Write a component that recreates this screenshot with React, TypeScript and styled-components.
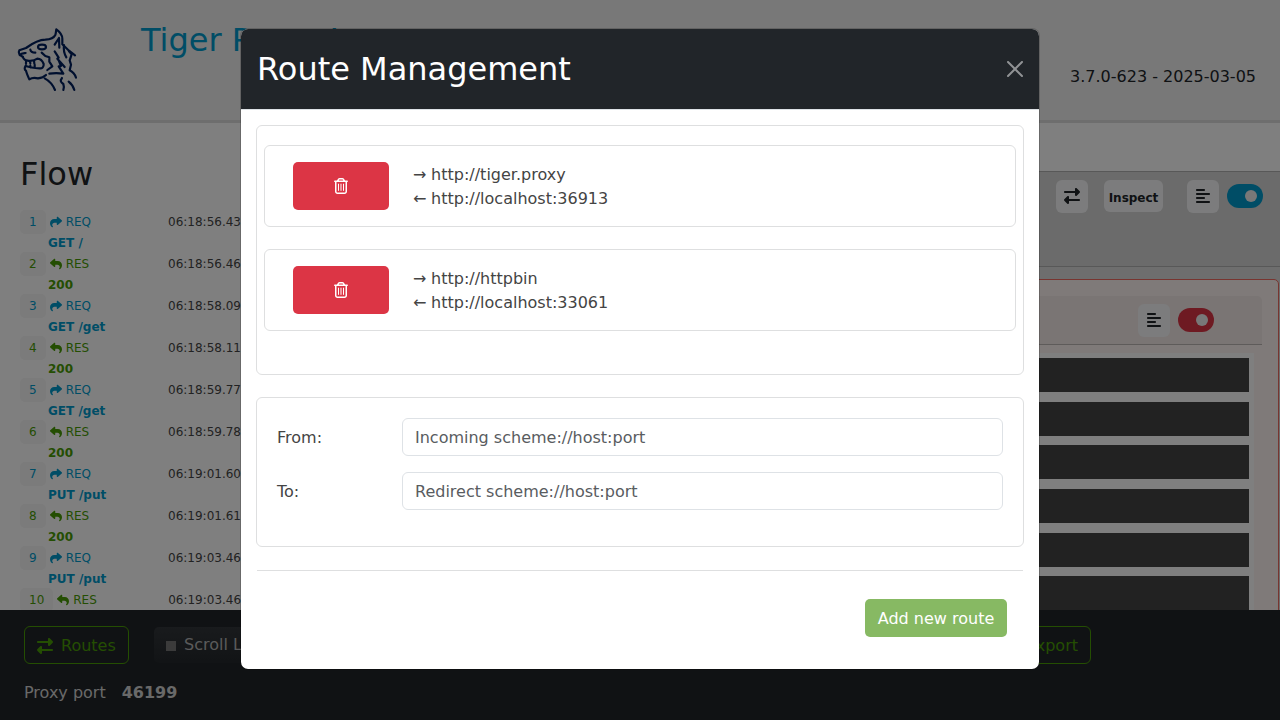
import React from "react";
import styled, { createGlobalStyle } from "styled-components";
import { FaAlignLeft, FaRegTrashCan, FaReply, FaRightLeft, FaShare } from "react-icons/fa6";

const GlobalStyle = createGlobalStyle`
  *, *::before, *::after { box-sizing: border-box; }
  body {
    margin: 0;
    overflow: hidden;
    background: #fff;
    color: #212529;
    font: 16px/24px "DejaVu Sans", sans-serif;
  }
  button, input { font: inherit; }
`;

const BLUE = "#009bcd";
const GREEN = "#499c04";

const Page = styled.div`
  display: flex;
  flex-direction: column;
  height: 720px;
  overflow: hidden;
`;

const Header = styled.header`
  display: flex;
  align-items: flex-start;
  height: 123px;
  flex: none;
  padding: 20px 24px 0 10px;
  background: #f0f0f0;
  border-bottom: 3px solid #dcdcdc;
`;

const Logo = styled.svg`
  width: 80px;
  height: 80px;
  flex: none;
`;

const AppTitle = styled.h1`
  margin: 1px 0 0 51px;
  font-size: 32px;
  line-height: 38px;
  font-weight: 400;
  color: ${BLUE};
`;

const Version = styled.span`
  margin: 45px 0 0 auto;
`;

const Main = styled.main`
  display: flex;
  flex: 1;
  min-height: 0;
  overflow: hidden;
`;

const Sidebar = styled.aside`
  width: 320px;
  flex: none;
  padding: 32px 0 0 20px;
`;

const FlowTitle = styled.h2`
  margin: 0 0 17px;
  font-size: 32px;
  line-height: 39px;
  font-weight: 400;
`;

const FlowItem = styled.div<{ $color: string }>`
  height: 42px;
  font-size: 12px;
  line-height: 21px;
  color: ${(p) => p.$color};
`;

const FlowLine = styled.div`
  display: flex;
  align-items: center;
  height: 22px;
`;

const Badge = styled.span`
  height: 24px;
  flex: none;
  padding: 1px 9px 0;
  border-radius: 5px;
  background: #f6f6f6;
  line-height: 22px;
`;

const FlowKind = styled.span<{ $wide: boolean }>`
  display: flex;
  align-items: center;
  gap: 4px;
  width: ${(p) => (p.$wide ? 115 : 122)}px;
  padding-left: 4px;
`;

const FlowTime = styled.span`
  margin-left: auto;
  width: 152px;
  color: #444;
`;

const FlowDetail = styled.div`
  padding-left: 28px;
  font-weight: 700;
  line-height: 20px;
`;

const Content = styled.section`
  display: flex;
  flex-direction: column;
  flex: 1;
  padding-top: 48px;
`;

const Toolbar = styled.div`
  display: flex;
  justify-content: flex-end;
  align-items: flex-start;
  height: 96px;
  flex: none;
  padding: 8px 17px 0 0;
  background: #d6d6d6;
  border-top: 1px solid #b0b0b0;
  border-bottom: 1px solid #b0b0b0;
`;

const ToolButton = styled.button<{ $gap: number; $width?: number }>`
  display: flex;
  align-items: center;
  justify-content: center;
  width: ${(p) => p.$width ?? 32}px;
  height: ${(p) => (p.$width ? 32 : 33)}px;
  margin: 0 ${(p) => p.$gap}px 0 0;
  padding: ${(p) => (p.$width ? "4px 0 0" : "0 0 1px")};
  border: 0;
  border-radius: 6px;
  background: #f8f9fa;
  color: #212529;
  font-size: ${(p) => (p.$width ? 12 : 16)}px;
  font-weight: 700;
`;

const Toggle = styled.span<{ $color: string }>`
  display: flex;
  align-items: center;
  justify-content: flex-end;
  width: 36px;
  height: 24px;
  margin-top: 4px;
  padding-right: 6px;
  border-radius: 12px;
  background: ${(p) => p.$color};

  &::after {
    content: "";
    width: 12px;
    height: 12px;
    border-radius: 50%;
    background: #f0f0f0;
  }
`;

const Messages = styled.div`
  flex: 1;
  padding: 12px 1px 0 0;
  background: #dcdcdc;
`;

const MessageCard = styled.div`
  height: 420px;
  padding: 16px 16px 0 20px;
  border: 1px solid #f06a60;
  border-radius: 5px;
  background: #fef4f2;
`;

const MessageHeader = styled.div`
  display: flex;
  justify-content: flex-end;
  height: 49px;
  padding: 8px 48px 0 0;
  border-bottom: 1px solid #bdb6b5;
  border-radius: 5px 5px 0 0;
  background: #f4eae8;
`;

const Blocks = styled.div`
  display: flex;
  flex-direction: column;
  gap: 9.7px;
  margin: 8px 8px 0 0;
  padding: 5px 5px 0 0;
  background: #fff;
`;

const Block = styled.div`
  height: 34px;
  flex: none;
  background: #444;
`;

const Footer = styled.footer`
  height: 110px;
  flex: none;
  padding: 16px 24px 0;
  background: #212529;
  color: #d2d2d2;
`;

const FooterRow = styled.div`
  display: flex;
  align-items: center;
  height: 38px;
`;

const OutlineButton = styled.button<{ $width: number }>`
  display: flex;
  align-items: center;
  gap: 8px;
  width: ${(p) => p.$width}px;
  height: 38px;
  padding: 1px 12px 0;
  border: 1px solid ${GREEN};
  border-radius: 6px;
  background: transparent;
  color: ${GREEN};
`;

const ScrollLock = styled.span`
  display: flex;
  align-items: center;
  gap: 8px;
  width: 150px;
  height: 36px;
  margin: 0 auto 0 25px;
  padding: 0 12px;
  border-radius: 5px;
  background: linear-gradient(#32363a, #24282c);
  color: #b5b5b5;
`;

const LockBox = styled.i`
  width: 10px;
  height: 10px;
  margin-top: 2px;
  background: #777;
`;

const ExportSlot = styled.div`
  display: flex;
  margin-right: 165px;
`;

const Port = styled.div`
  display: flex;
  gap: 16px;
  margin-top: 17px;
`;

const Backdrop = styled.div`
  position: absolute;
  inset: 0;
  background: rgba(0, 0, 0, 0.5);
`;

const Modal = styled.div`
  position: absolute;
  top: 28px;
  left: 240px;
  width: 800px;
  height: 642px;
  border: 1px solid rgba(0, 0, 0, 0.175);
  border-radius: 8px;
  background: #fff;
  background-clip: padding-box;
  color: #444;
`;

const ModalHeader = styled.div`
  display: flex;
  align-items: center;
  justify-content: space-between;
  height: 81px;
  padding: 0 16px;
  border-bottom: 1px solid #dee2e6;
  border-radius: 7px 7px 0 0;
  background: #212529;
`;

const ModalTitle = styled.h1`
  margin: 0;
  font-size: 32px;
  line-height: 48px;
  font-weight: 400;
  color: #fff;
`;

const CloseIcon = styled.svg`
  width: 16px;
  height: 16px;
  opacity: 0.5;
  fill: #fff;
`;

const ModalBody = styled.div`
  padding: 15px 15px 0;
`;

const RouteList = styled.div`
  display: flex;
  flex-direction: column;
  gap: 22px;
  height: 250px;
  padding: 19px 7px;
  border: 1px solid #dedfe0;
  border-radius: 6px;
`;

const RouteCard = styled.div`
  display: flex;
  align-items: center;
  gap: 24px;
  height: 82px;
  flex: none;
  padding: 0 28px;
  border: 1px solid #dedfe0;
  border-radius: 6px;
`;

const RouteText = styled.div`
  padding-top: 2px;
  word-spacing: -0.4px;
`;

const DeleteButton = styled.button`
  display: flex;
  align-items: center;
  justify-content: center;
  width: 96px;
  height: 48px;
  border: 0;
  border-radius: 5px;
  background: #dc3545;
  color: #fff;
`;

const RouteForm = styled.div`
  display: flex;
  flex-direction: column;
  gap: 16px;
  height: 150px;
  margin-top: 22px;
  padding: 20px;
  border: 1px solid #dedfe0;
  border-radius: 6px;
`;

const Field = styled.label`
  display: grid;
  grid-template-columns: 125px 601px;
  align-items: center;
`;

const FieldName = styled.span`
  padding-top: 2px;
`;

const TextInput = styled.input`
  height: 38px;
  padding: 0 12px;
  border: 1px solid #dee2e6;
  border-radius: 6px;
  background: #fff;
  color: #444;

  &::placeholder { color: #595c5f; opacity: 1; }
`;

const Divider = styled.div`
  margin: 23px 1px 0;
  border-top: 1px solid #dedfe0;
`;

const Actions = styled.div`
  display: flex;
  justify-content: flex-end;
  padding: 28px 17px 0;
`;

const AddButton = styled.button`
  width: 142px;
  height: 38px;
  padding: 2px 0 0;
  border: 0;
  border-radius: 5px;
  background: #87b963;
  color: #fff;
`;

const flow = [
  { req: true, text: "GET /", time: "06:18:56.438" },
  { req: false, text: "200", time: "06:18:56.462" },
  { req: true, text: "GET /get", time: "06:18:58.094" },
  { req: false, text: "200", time: "06:18:58.113" },
  { req: true, text: "GET /get", time: "06:18:59.774" },
  { req: false, text: "200", time: "06:18:59.786" },
  { req: true, text: "PUT /put", time: "06:19:01.604" },
  { req: false, text: "200", time: "06:19:01.616" },
  { req: true, text: "PUT /put", time: "06:19:03.462" },
  { req: false, text: "", time: "06:19:03.468" },
];

const routes = [
  { from: "http://tiger.proxy", to: "http://localhost:36913" },
  { from: "http://httpbin", to: "http://localhost:33061" },
];

const TigerLogo = () => (
  <Logo viewBox="0 0 240 240" fill="none" stroke="#001f5c" strokeWidth="6.5" strokeLinecap="round" strokeLinejoin="round">
    <path d="M38 110 C28 106 24 98 28 91 L48 84 C70 68 88 59 106 59 C121 58 131 55 136 45 C138 39 138 33 139 28 C150 36 157 44 157 56 L157 73 L177 92 L195 106" />
    <path d="M147 54 L134 74 M147 54 L148 83 M162 75 C160 88 162 100 169 112 M177 94 L185 103 L179 121 L183 134 L179 151 C189 156 195 164 198 173" />
    <ellipse cx="96" cy="81" rx="12" ry="7" />
    <path d="M29 105 C34 100 40 100 47 99 M61 89 C62 95 66 98 76 98" />
    <path d="M38 110 C41 118 45 122 53 122 C67 124 75 121 82 116 C91 116 98 124 101 132 C102 141 96 146 89 145 C75 144 62 143 47 138 M48 125 L48 132 M60 124 L61 130 M72 122 L73 131 M61 137 L61 142 M74 134 L74 142" />
    <path d="M47 138 C43 143 43 149 48 152 C50 160 54 169 58 178 C67 172 75 173 84 175 C93 174 102 171 108 165" />
    <path d="M95 98 L106 108 L118 112 L118 125 L127 139 L112 150 M134 94 L146 113 L142 116 L164 141 M144 116 L153 138 L146 139 L160 161 C146 159 131 159 118 161" />
    <path d="M104 175 C121 184 129 195 135 210 M156 174 C149 183 153 187 160 192 C163 200 162 205 160 210 M176 185 C185 192 190 200 193 210" />
  </Logo>
);

export default function App() {
  return (
    <>
      <GlobalStyle />
      <Page>
        <Header>
          <TigerLogo />
          <AppTitle>Tiger Proxy Log</AppTitle>
          <Version>3.7.0-623 - 2025-03-05</Version>
        </Header>
        <Main>
          <Sidebar>
            <FlowTitle>Flow</FlowTitle>
            {flow.map((item, i) => (
              <FlowItem key={i} $color={item.req ? BLUE : GREEN}>
                <FlowLine>
                  <Badge>{i + 1}</Badge>
                  <FlowKind $wide={i > 8}>
                    {item.req ? <FaShare size={12} /> : <FaReply size={12} />}
                    {item.req ? "REQ" : "RES"}
                  </FlowKind>
                  <FlowTime>{item.time}</FlowTime>
                </FlowLine>
                <FlowDetail>{item.text}</FlowDetail>
              </FlowItem>
            ))}
          </Sidebar>
          <Content>
            <Toolbar>
              <ToolButton $gap={16}><FaRightLeft /></ToolButton>
              <ToolButton $gap={24} $width={59}>Inspect</ToolButton>
              <ToolButton $gap={8}><FaAlignLeft /></ToolButton>
              <Toggle $color={BLUE} />
            </Toolbar>
            <Messages>
              <MessageCard>
                <MessageHeader>
                  <ToolButton $gap={8}><FaAlignLeft /></ToolButton>
                  <Toggle $color="#dc3545" />
                </MessageHeader>
                <Blocks>
                  {[0, 1, 2, 3, 4, 5].map((n) => <Block key={n} />)}
                </Blocks>
              </MessageCard>
            </Messages>
          </Content>
        </Main>
        <Footer>
          <FooterRow>
            <OutlineButton $width={105}><FaRightLeft />Routes</OutlineButton>
            <ScrollLock><LockBox />Scroll Lock</ScrollLock>
            <ExportSlot><OutlineButton $width={101}><FaShare />Export</OutlineButton></ExportSlot>
          </FooterRow>
          <Port><span>Proxy port</span><b>46199</b></Port>
        </Footer>
      </Page>
      <Backdrop />
      <Modal role="dialog">
        <ModalHeader>
          <ModalTitle>Route Management</ModalTitle>
          <CloseIcon viewBox="0 0 16 16">
            <path d="M.293.293a1 1 0 0 1 1.414 0L8 6.586 14.293.293a1 1 0 1 1 1.414 1.414L9.414 8l6.293 6.293a1 1 0 0 1-1.414 1.414L8 9.414l-6.293 6.293a1 1 0 0 1-1.414-1.414L6.586 8 .293 1.707a1 1 0 0 1 0-1.414z" />
          </CloseIcon>
        </ModalHeader>
        <ModalBody>
          <RouteList>
            {routes.map((route) => (
              <RouteCard key={route.to}>
                <DeleteButton aria-label="Delete route"><FaRegTrashCan /></DeleteButton>
                <RouteText>
                  <div>→ {route.from}</div>
                  <div>← {route.to}</div>
                </RouteText>
              </RouteCard>
            ))}
          </RouteList>
          <RouteForm>
            <Field><FieldName>From:</FieldName><TextInput placeholder="Incoming scheme://host:port" /></Field>
            <Field><FieldName>To:</FieldName><TextInput placeholder="Redirect scheme://host:port" /></Field>
          </RouteForm>
          <Divider />
          <Actions><AddButton>Add new route</AddButton></Actions>
        </ModalBody>
      </Modal>
    </>
  );
}
